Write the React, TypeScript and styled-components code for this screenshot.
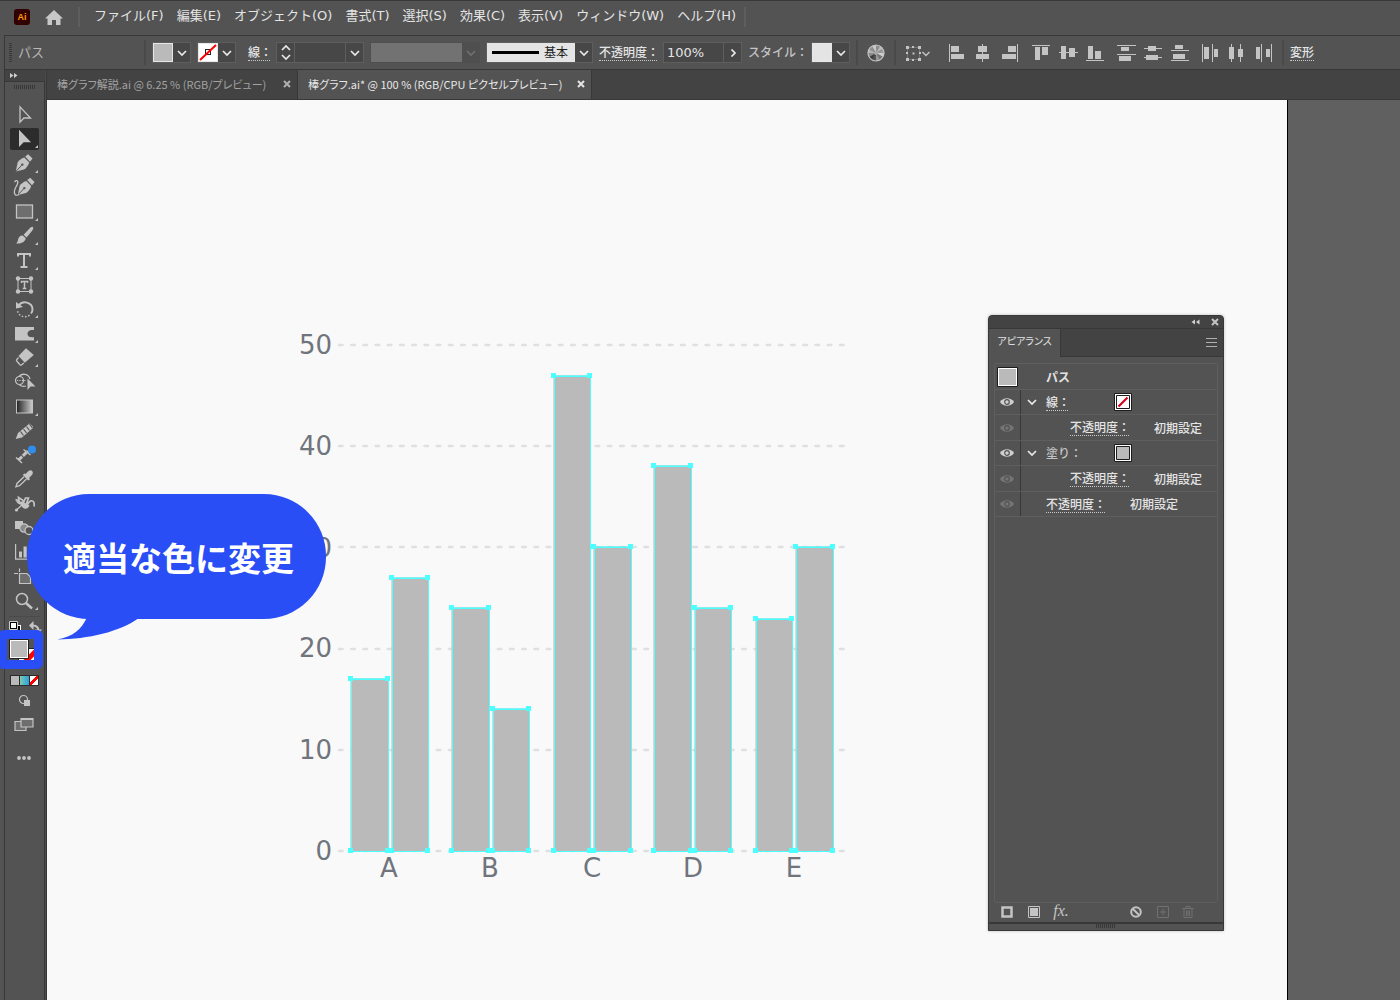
import React from "react";
import styled, { createGlobalStyle } from "styled-components";

const c = {
  bar: "#535353",
  dark: "#434343",
  line: "#383838",
  soft: "#5e5e5e",
  field: "#474747",
  icon: "#c4c4c4",
  text: "#e4e4e4",
  gray: "#bababa",
  blue: "#2a4ef5",
  cyan: "#4dffff",
};

const Global = createGlobalStyle`
  *, *::before, *::after { box-sizing: border-box; }
  body {
    margin: 0;
    background: ${c.bar};
    color: ${c.text};
    font: 12px/16px "DejaVu Sans", "Noto Sans CJK JP", sans-serif;
  }
  button, input, select { font: inherit; color: inherit; margin: 0; padding: 0; border: 0; background: none; border-radius: 0; }
  svg { display: block; }
`;

const Window = styled.div`
  position: relative;
  display: flex;
  flex-direction: column;
  min-height: 100vh;
  overflow: hidden;
  border-top: 1px solid ${c.line};
`;

/* ---------- menu bar ---------- */
const MenuBar = styled.header`
  display: flex;
  align-items: center;
  height: 34px;
  padding: 0 14px 2px;
`;
const Logo = styled.span`
  width: 16px;
  height: 16px;
  border-radius: 3px;
  background: #330000;
  color: #ff9a00;
  font: bold 9px/16px "Liberation Sans", sans-serif;
  text-align: center;
`;
const HomeButton = styled.button`
  margin: 0 14px;
`;
const MenuRule = styled.span`
  width: 2px;
  height: 20px;
  background: ${c.soft};
`;
const Menus = styled.nav`
  display: flex;
  gap: 13px;
  padding: 0 8px 2px 14px;
  font-size: 13px;
`;
const MenuButton = styled.button`
  white-space: nowrap;
`;

/* ---------- control bar ---------- */
const ControlBar = styled.div`
  display: flex;
  align-items: center;
  gap: 6px;
  height: 35px;
  margin-left: 4px;
  padding-left: 4px;
  border: 1px solid ${c.line};
  border-right: 0;
  white-space: nowrap;
`;
const Grip = styled.span<{ $w: number; $h: number; $vertical?: boolean }>`
  flex: none;
  width: ${(p) => p.$w}px;
  height: ${(p) => p.$h}px;
  background: repeating-linear-gradient(${(p) => (p.$vertical ? "180deg" : "90deg")}, ${c.line} 0 1px, transparent 1px 2px);
`;
const Rule = styled.span`
  flex: none;
  width: 2px;
  height: 25px;
  background: #4a4a4a;
`;
const BarTitle = styled.span`
  flex: none;
  width: 120px;
  color: #b8b8b8;
  font-size: 13px;
`;
const Dotted = styled.button<{ $w?: number; $indent?: number; $plain?: boolean }>`
  flex: none;
  width: ${(p) => (p.$w ? p.$w + "px" : "auto")};
  margin-left: ${(p) => p.$indent ?? 0}px;
  padding-top: 2px;
  line-height: 14px;
  text-align: left;
  white-space: nowrap;
  font-weight: 500;
  color: ${(p) => (p.$plain ? "#c4c4c4" : c.text)};
  border-bottom: 1px ${(p) => (p.$plain ? "solid transparent" : "dotted #c8c8c8")};
`;
const Combo = styled.div<{ $disabled?: boolean }>`
  position: relative;
  flex: none;
  display: flex;
  height: 21px;
  border: 1px solid ${(p) => (p.$disabled ? "transparent" : c.soft)};
  background: ${(p) => (p.$disabled ? "#4f4f4f" : c.field)};
`;
const Arrow = styled.button`
  display: grid;
  place-items: center;
  width: 17px;
  height: 19px;
`;
const Swatch = styled.button<{ $fill: string }>`
  width: 20px;
  height: 19px;
  border: 1px solid #e6e6e6;
  background: ${(p) => p.$fill};
`;
const Stepper = styled.div`
  display: flex;
  flex-direction: column;
  width: 18px;
  border-right: 1px solid ${c.soft};
`;
const StepButton = styled.button`
  display: grid;
  place-items: center;
  flex: 1;
`;
const Field = styled.input<{ $w: number }>`
  width: ${(p) => p.$w}px;
  padding: 0 3px;
  border-right: 1px solid ${c.soft};
  font-size: 13px;
`;
const Profile = styled.select`
  width: 91px;
  appearance: none;
  background: #828282;
`;
const BrushSelect = styled.select`
  width: 88px;
  padding-left: 57px;
  appearance: none;
  background: #e4e4e4;
  color: #1c1c1c;
`;
const BrushLine = styled.span`
  position: absolute;
  left: 5px;
  top: 8px;
  width: 47px;
  height: 3px;
  background: #000;
  pointer-events: none;
`;
const IconButton = styled.button<{ $w: number }>`
  flex: none;
  display: grid;
  place-items: center;
  width: ${(p) => p.$w}px;
  height: 24px;
`;
const AlignGroups = styled.div`
  display: flex;
  gap: 11px;
  padding-left: 7px;
`;
const AlignGroup = styled.div`
  display: flex;
  gap: 7px;
`;

/* ---------- main area ---------- */
const Main = styled.div`
  flex: 1;
  display: flex;
  margin-left: 4px;
  border-left: 1px solid ${c.line};
`;
const Tools = styled.aside`
  flex: none;
  display: flex;
  flex-direction: column;
  width: 42px;
  border-right: 1px solid ${c.line};
  box-shadow: inset -1px 0 #4b4b4b, inset -2px 0 ${c.line};
`;
const ToolsHead = styled.div`
  height: 12px;
  width: 40px;
  padding: 3px 5px;
  background: ${c.dark};
  border-bottom: 1px solid ${c.line};
`;
const ToolsGrip = styled.div`
  height: 22px;
  padding: 3px 9px;
  display: flex;
`;
const ToolList = styled.div`
  display: flex;
  flex-direction: column;
  justify-content: space-between;
  height: 508px;
  padding-left: 5px;
`;
const ToolButton = styled.button<{ $on?: boolean }>`
  width: 29px;
  height: 22px;
  border-radius: 2px;
  background: ${(p) => (p.$on ? "#2c2c2c" : "transparent")};
`;
const ToolRule = styled.hr`
  width: 31px;
  height: 1px;
  margin: 4px 4px;
  border: 0;
  background: #4a4a4a;
`;
const MiniRow = styled.div`
  display: flex;
  justify-content: space-between;
  width: 37px;
  height: 14px;
  padding-left: 4px;
`;
const FillStroke = styled.div`
  position: relative;
  width: 30px;
  height: 30px;
  margin: 4px 0 6px 4px;
`;
const Highlight = styled.div`
  position: absolute;
  left: -11px;
  top: -9px;
  width: 45px;
  height: 39px;
  border: 9px solid ${c.blue};
  border-radius: 6px;
`;
const ModeRow = styled.div`
  display: flex;
  width: 29px;
  height: 11px;
  margin-left: 5px;
  border: 1px solid #2c2c2c;
`;
const Mode = styled.button<{ $bg: string }>`
  flex: 1;
  background: ${(p) => p.$bg};
  & + & { border-left: 1px solid #2c2c2c; }
`;
const LowerIcons = styled.div`
  display: flex;
  flex-direction: column;
  align-items: center;
  width: 38px;
  gap: 10px;
  padding-top: 8px;
`;

const Workspace = styled.main`
  flex: 1;
  min-width: 0;
  display: flex;
  flex-direction: column;
`;
const TabBar = styled.div`
  display: flex;
  height: 30px;
  background: ${c.dark};
  border-bottom: 1px solid ${c.line};
`;
const Tab = styled.div<{ $on?: boolean; $w: number }>`
  display: flex;
  justify-content: space-between;
  align-items: center;
  width: ${(p) => p.$w}px;
  padding: 0 6px 2px 10px;
  border-right: 1px solid ${c.line};
  background: ${(p) => (p.$on ? c.bar : "transparent")};
  color: ${(p) => (p.$on ? "#e8e8e8" : "#a2a2a2")};
`;
const TabName = styled.button`
  font: 11px/16px "Noto Sans CJK JP", sans-serif;
  font-feature-settings: "palt";
  white-space: nowrap;
`;
const Canvas = styled.div`
  flex: 1;
  display: flex;
  padding-right: 112px;
  background: #606060;
`;
const Artboard = styled.div`
  position: relative;
  flex: 1;
  padding: 230px 0 0 243px;
  background: #f9f9f9;
  border-right: 1px solid #000;
`;
const ChartText = styled.text`
  font: 26px "DejaVu Sans", sans-serif;
  fill: #70747c;
`;

/* ---------- floating panel ---------- */
const Panel = styled.section`
  position: absolute;
  left: 941px;
  top: 215px;
  width: 236px;
  display: flex;
  flex-direction: column;
  background: ${c.bar};
  border: 1px solid ${c.line};
  border-radius: 4px 4px 0 0;
  box-shadow: 0 0 3px rgba(0, 0, 0, 0.25);
  font-weight: 500;
`;
const PanelTop = styled.div`
  display: flex;
  justify-content: flex-end;
  align-items: center;
  gap: 11px;
  height: 13px;
  padding-right: 4px;
  border-bottom: 1px solid ${c.line};
  border-radius: 3px 3px 0 0;
  background: ${c.dark};
`;
const PanelTabs = styled.div`
  display: flex;
  justify-content: space-between;
  height: 28px;
  padding-right: 6px;
  background: ${c.dark};
  border-bottom: 1px solid ${c.line};
`;
const PanelTab = styled.button`
  width: 72px;
  height: 28px;
  padding: 0 0 4px;
  background: ${c.bar};
  border-right: 1px solid ${c.line};
  font: 10px/16px "Noto Sans CJK JP", sans-serif;
  font-feature-settings: "palt";
`;
const List = styled.div`
  height: 540px;
  margin: 6px 5px 0;
  border: 1px solid ${c.soft};
  border-radius: 2px;
`;
const Row = styled.div<{ $h: number }>`
  display: flex;
  align-items: stretch;
  height: ${(p) => p.$h}px;
  border-bottom: 1px solid ${c.soft};
`;
const EyeCell = styled.button`
  display: grid;
  place-items: center;
  width: 26px;
  padding-right: 1px;
  border-right: 1px solid ${c.line};
`;
const RowBody = styled.div<{ $sub?: boolean }>`
  flex: 1;
  display: flex;
  align-items: center;
  padding-left: ${(p) => (p.$sub ? 49 : 6)}px;
`;
const ObjectSwatch = styled.button`
  flex: none;
  align-self: center;
`;
const RowName = styled.strong`
  align-self: center;
  margin-left: 28px;
  padding-top: 2px;
  font-weight: 700;
`;
const Value = styled.span`
  margin-left: 25px;
  padding-top: 2px;
`;
const Expand = styled.button`
  width: 10px;
  margin-right: 9px;
`;
const Gap = styled.span<{ $short?: boolean }>`
  width: ${(p) => (p.$short ? 34 : 46)}px;
`;
const ObjectCell = styled.div`
  display: flex;
  padding-left: 2px;
`;
const Footer = styled.div`
  display: flex;
  align-items: center;
  height: 19px;
  padding: 0 28px 1px 12px;
`;
const FooterButton = styled.button<{ $gap: number; $w: number }>`
  width: ${(p) => p.$w}px;
  margin-left: ${(p) => p.$gap}px;
`;
const Fx = styled.span`
  font: italic 16px/14px "Liberation Serif", serif;
  color: ${c.icon};
`;
const PanelFoot = styled.div`
  display: flex;
  justify-content: center;
  height: 8px;
  border-top: 2px solid ${c.line};
`;

/* ---------- callout ---------- */
const Callout = styled.div`
  position: absolute;
  left: 27px;
  top: 493px;
  width: 299px;
  height: 125px;
  padding-left: 4px;
  border-radius: 62px;
  background: ${c.blue};
  color: #fff;
  text-align: center;
  font: 700 33px/126px "Noto Sans CJK JP", sans-serif;
  white-space: nowrap;
`;
const Tail = styled.svg`
  position: absolute;
  left: 30px;
  top: 123px;
`;

const Chevron = ({ color = "#e8e8e8", d = "M1 2l4 4 4-4" }: { color?: string; d?: string }) => (
  <svg width="10" height="8" viewBox="0 0 10 8" fill="none" stroke={color} strokeWidth="1.7"><path d={d} /></svg>
);
const Cross = ({ color = "#c4c4c4" }: { color?: string }) => (
  <svg width="8" height="8" viewBox="0 0 8 8" stroke={color} strokeWidth="2"><path d="M1 1l6 6M7 1l-6 6" /></svg>
);

const nib = (
  <>
    <path d="M5.800 18.500L7.600 9.600C9 7 11.500 5.500 14.300 4.500L19.200 9.600C18.200 12.700 16.500 15.200 14 16.400Z" />
    <path d="M15.200 3.600L18.200 1.200L22.500 5.400L20 8.800Z" />
    <path d="M6.300 18L11.700 12.300" stroke={c.bar} strokeWidth="1" />
    <circle cx="12.300" cy="11.600" r="1.200" fill={c.bar} />
  </>
);

type Tool = { name: string; more?: boolean; on?: boolean; art: React.ReactNode };
const tools: Tool[] = [
  { name: "選択", art: <path d="M10 2.800V18.200L13.900 14H20.500Z" fill="none" stroke={c.icon} strokeWidth="1.300" /> },
  { name: "ダイレクト選択", on: true, more: true, art: <path d="M9 1.700V19L13.700 14.300H21Z" /> },
  { name: "ペン", more: true, art: nib },
  {
    name: "曲線",
    art: (<><g transform="translate(2 -.5)">{nib}</g><path d="M4.500 5C7 2 9 4 7 8S3 14 5 17.500C6 18.500 8 18.300 9 17.500" fill="none" stroke={c.icon} strokeWidth="1.300" /></>),
  },
  { name: "長方形", more: true, art: <rect x="6.500" y="4" width="16" height="13" fill="#6e6e6e" stroke={c.icon} strokeWidth="1.300" /> },
  {
    name: "ブラシ", more: true,
    art: (<><path d="M22.500 1.800C24 2.500 23 4.500 22 6L16.500 12.500L13.600 9.700L19 4C20.500 2.500 21.500 1.700 22.500 1.800Z" /><path d="M12.800 10.500L15.700 13.300C15.500 16.500 11 19.500 6 18.300C8.500 17 7.500 14 9.200 12C10.200 10.900 11.500 10.500 12.800 10.500Z" /></>),
  },
  { name: "文字", more: true, art: <path d="M8 6.500V4H20V6.500M14 4V17M10.500 17H17.500" fill="none" stroke={c.icon} strokeWidth="2" /> },
  {
    name: "文字タッチ",
    art: (<><path d="M8 4.500H21V17.500H8Z" fill="none" stroke={c.icon} /><circle cx="8" cy="4.500" r="2.200" /><circle cx="21" cy="4.500" r="2.200" /><circle cx="8" cy="17.500" r="2.200" /><circle cx="21" cy="17.500" r="2.200" /><path d="M11.500 9V7.500H17.500V9M14.500 7.500V14.500M12.700 14.500H16.300" fill="none" stroke={c.icon} strokeWidth="1.500" /></>),
  },
  {
    name: "回転", more: true,
    art: (<><path d="M8.500 7.500C13 1.500 22.500 4.500 22.500 11.500C22.500 13 22 14.300 21 15.500" fill="none" stroke={c.icon} strokeWidth="1.900" /><path d="M6 4V10.500L13 9Z" /><path d="M19.500 17.200C15 20.500 9 18.500 7.500 13" fill="none" stroke={c.icon} strokeWidth="1.500" strokeDasharray="1.500 1.800" /></>),
  },
  { name: "線幅", more: true, art: <path d="M5 4H24V7H22.500C19 7 17.500 9 17.500 11S19 14.300 22.500 14.300H24V17.500H5Z" /> },
  {
    name: "消しゴム", more: true,
    art: (<><path d="M16 1.300L23.800 8L14.800 15.700L8.500 9Z" /><path d="M8.500 10.500L6.600 12.800C6.300 13.300 6.500 13.800 6.900 14.200L10 17.700C10.500 18.200 11.200 18.200 11.700 17.800L13.800 16" fill="none" stroke={c.icon} strokeWidth="1.300" /></>),
  },
  {
    name: "シェイプ形成",
    art: (<><circle cx="9.500" cy="9.500" r="4" fill="none" stroke={c.icon} strokeWidth="1.200" /><path d="M9 5.500C12 2 18.500 2.500 20 8M9.500 14C12 15.800 14 15.600 16 15" fill="none" stroke={c.icon} strokeWidth="1.300" /><path d="M7 9.500H16" stroke={c.icon} strokeDasharray="1.200 1.200" /><path d="M17.500 7.500V19L20.500 15.500H25.500Z" /></>),
  },
  { name: "グラデーション", more: true, art: <rect x="6.500" y="4" width="16" height="13" fill="url(#toolGradient)" stroke={c.icon} /> },
  {
    name: "鉛筆",
    art: (<><path d="M5.700 19L8 13L19.500 3.500L23 6.500V8L12 17.500Z" /><path d="M10.500 11.500L13.500 15.500M13.500 9L16.500 13M16.500 6.500L19.500 10.500M19.500 4L22.500 8" stroke={c.bar} strokeWidth="1.200" /></>),
  },
  {
    name: "寸法",
    art: (<><path d="M8.500 16L18 7" stroke={c.icon} strokeWidth="3" strokeDasharray="5 1" /><path d="M6 13.500L12 19M13.500 5.500L20.500 11" stroke={c.icon} strokeWidth="1.400" /><circle cx="22" cy="5.500" r="4" fill="#2f8ded" /></>),
  },
  {
    name: "スポイト",
    art: (<><path d="M15.500 6L18.500 3C20 1.800 22.500 2 22.800 4.500C23 6 22 7 21 8L19 10L20 11.200L18.300 12.500L12.800 7L14.300 5.500Z" /><path d="M14 8.700L7 15.500L6 18.800L9.500 17.700L16.500 11" fill="none" stroke={c.icon} strokeWidth="1.400" /></>),
  },
  {
    name: "パペットワープ",
    art: (<><path d="M5.500 6.500L9 8L8.500 4.500L12.500 7L13.500 9.500L15.500 5L18.500 5L16.500 10.500C18.500 11 19 8.500 21 7.800C23.500 7.300 24.800 10 24 13.500" fill="none" stroke={c.icon} strokeWidth="1.700" /><path d="M6 8C8 12 11 11 11.500 12.500C12.500 17 19 16.500 19.500 12L15 10L11 8.500Z" /><path d="M6.500 17L13 11" stroke={c.icon} strokeWidth="1.200" /><circle cx="6.500" cy="17" r="1.600" /></>),
  },
  {
    name: "ブレンド",
    art: (<><rect x="5" y="4" width="8" height="8" /><circle cx="14" cy="11" r="4.200" fill="#8a8a8a" stroke={c.icon} strokeWidth="1.200" /><circle cx="19" cy="13.500" r="4" fill={c.bar} stroke={c.icon} strokeWidth="1.300" /></>),
  },
  { name: "グラフ", more: true, art: <path d="M5 3H6.200V17.500H24V18.700H5ZM9 10.500H12V16.500H9ZM13.500 5.500H16.700V16.500H13.500ZM18.500 8H21.500V16.500H18.500Z" /> },
  { name: "アートボード", art: <path d="M4 7.500H8M9.500 2.500V6M9.500 7.500H17L20.500 11V17.500H9.500Z" fill="#6e6e6e" stroke={c.icon} strokeWidth="1.200" /> },
  { name: "ズーム", more: true, art: <><circle cx="12" cy="9" r="5.500" fill="none" stroke={c.icon} strokeWidth="1.500" /><path d="M16 13L22 18.500" stroke={c.icon} strokeWidth="2.500" /></> },
];

const bars = [
  [351, 388, 679], [392, 428, 578], [452, 489, 608], [493, 529, 709], [554, 590, 376],
  [594, 631, 547], [654, 691, 466], [695, 731, 608], [756, 792, 619], [796, 833, 547],
];
const levels: [string, number, number][] = [
  ["50", 345, 354], ["40", 446, 455], ["30", 547, 557], ["20", 649, 657], ["10", 750, 759], ["0", 851, 860],
];
const groups: [string, number][] = [["A", 389], ["B", 490], ["C", 592], ["D", 693], ["E", 794]];

const Chart = () => (
  <svg width="560" height="560" viewBox="290 330 560 560" role="img" aria-label="棒グラフ">
    {levels.map(([label, y, base]) => (
      <g key={label}>
        <path d={`M339 ${y}H845`} stroke="#e0e0e0" strokeWidth="2.600" strokeLinecap="round" strokeDasharray="3.500 8.720" />
        <ChartText x="332" y={base} textAnchor="end">{label}</ChartText>
      </g>
    ))}
    {bars.map(([l, r, t]) => (
      <rect key={l} x={l - 0.5} y={t - 0.5} width={r - l + 1} height={852 - t} fill={c.gray} />
    ))}
    {bars.map(([l, r, t]) => (
      <g key={l}>
        <rect x={l + 0.5} y={t + 0.5} width={r - l} height={851 - t} fill="none" stroke={c.cyan} />
        <path d={`M${l} ${t - 0.5}H${r}`} stroke={c.cyan} opacity=".6" />
        {[[l, t], [r, t], [l, 851], [r, 851]].map(([x, y]) => (
          <rect key={`${x}-${y}`} x={x - 3} y={y - 3} width="5" height="5" fill={c.cyan} />
        ))}
      </g>
    ))}
    {groups.map(([label, x]) => (
      <ChartText key={label} x={x} y="877" textAnchor="middle">{label}</ChartText>
    ))}
  </svg>
);

const aligns: [string, string][][] = [
  [
    ["左揃え", "M2 1h1v18h-1zM4 3h8v6h-8zM4 11h13v5h-13z"],
    ["水平方向中央", "M8 1h1v18h-1zM4 3h9v6h-9zM2 11h13v5h-13z"],
    ["右揃え", "M16 1h1v18h-1zM7 3h8v6h-8zM1 11h14v5h-14z"],
  ],
  [
    ["上揃え", "M0 2h18v1h-18zM3 4h5v13h-5zM10 4h6v8h-6z"],
    ["垂直方向中央", "M0 9h19v1h-19zM2 3h5v13h-5zM10 5h6v9h-6z"],
    ["下揃え", "M0 17h18v1h-18zM2 3h5v13h-5zM9 8h6v8h-6z"],
  ],
  [
    ["上端分布", "M0 2h19v1h-19zM0 11h19v1h-19zM4 4h8v4h-8zM2 13h12v5h-12z"],
    ["垂直分布", "M0 5h18v1h-18zM0 14h18v1h-18zM4 3h8v5h-8zM2 12h12v5h-12z"],
    ["下端分布", "M0 7h18v1h-18zM0 17h18v1h-18zM4 2h8v4h-8zM2 11h12v5h-12z"],
  ],
  [
    ["左端分布", "M0 1h1v18h-1zM10 1h1v18h-1zM2 4h5v12h-5zM12 6h4v8h-4z"],
    ["水平分布", "M2 1h1v18h-1zM11 1h1v18h-1zM0 4h5v12h-5zM9 6h5v8h-5z"],
    ["右端分布", "M5 1h1v18h-1zM15 1h1v18h-1zM0 4h4v12h-4zM10 6h4v8h-4z"],
  ],
];

const Eye = ({ dim }: { dim?: boolean }) => (
  <svg width="14" height="10" viewBox="0 0 14 10">
    <path d="M0 5C3 0 11 0 14 5C11 10 3 10 0 5Z" fill={dim ? "#757575" : "#cfcfcf"} />
    <circle cx="7" cy="5" r="2.300" fill="none" stroke={c.bar} strokeWidth="1.200" />
  </svg>
);

const menus = ["ファイル(F)", "編集(E)", "オブジェクト(O)", "書式(T)", "選択(S)", "効果(C)", "表示(V)", "ウィンドウ(W)", "ヘルプ(H)"];

const Wheel = () => (
  <svg width="18" height="18" viewBox="-9 -9 18 18">
    {Array.from({ length: 12 }, (_, i) => {
      const a = (i * Math.PI) / 6;
      const b = ((i + 1) * Math.PI) / 6;
      const shade = ["#cfcfcf", "#777", "#9a9a9a", "#555", "#3f3f3f", "#8a8a8a", "#b4b4b4", "#909090", "#c8c8c8", "#8e8e8e", "#bbb", "#999"][i];
      return <path key={i} fill={shade} d={`M0 0L${8 * Math.cos(a)} ${8 * Math.sin(a)}A8 8 0 0 1 ${8 * Math.cos(b)} ${8 * Math.sin(b)}Z`} />;
    })}
    <circle r="8" fill="none" stroke="#c4c4c4" strokeWidth="1.200" />
    <circle r="2" fill="#a8a8a8" />
  </svg>
);

const AttributeSwatch = ({ fill, none }: { fill: string; none?: boolean }) => (
  <svg width="18" height="18" viewBox="0 0 18 18">
    <path d="M.5 .5H17.500V17.500H.5Z" fill="#fff" stroke="#1c1c1c" />
    <path d="M2.500 2.500H15.500V15.500H2.500Z" fill={fill} stroke="#1c1c1c" />
    {none && <path d="M4.500 13.500L13.500 4.500" stroke="#d0021b" strokeWidth="2.200" />}
  </svg>
);

const OpacityRow = ({ sub, h }: { sub?: boolean; h: number }) => (
  <Row $h={h}>
    <EyeCell aria-label="表示"><Eye dim /></EyeCell>
    <RowBody $sub={sub}>
      <Dotted $w={59} $indent={sub ? 0 : 19}>不透明度：</Dotted>
      <Value>初期設定</Value>
    </RowBody>
  </Row>
);

export default function App() {
  return (
    <Window>
      <Global />
      <MenuBar>
        <Logo>Ai</Logo>
        <HomeButton aria-label="ホーム">
          <svg width="20" height="17" viewBox="0 0 20 17" fill="#c8c8c8"><path d="M10 1L1 9.500H3.500V16H8V11H12V16H16.500V9.500H19Z" /></svg>
        </HomeButton>
        <MenuRule />
        <Menus>{menus.map((m) => <MenuButton key={m}>{m}</MenuButton>)}</Menus>
        <MenuRule />
      </MenuBar>

      <ControlBar>
        <Grip $w={3} $h={19} $vertical />
        <BarTitle>パス</BarTitle>
        <Rule />
        <Combo>
          <Swatch $fill={c.gray} aria-label="塗り" />
          <Arrow aria-label="塗りの一覧"><Chevron /></Arrow>
        </Combo>
        <Combo>
          <Swatch $fill="#fff" aria-label="線">
            <svg width="18" height="17" viewBox="0 0 18 17" fill="none"><rect x="6.500" y="5.500" width="5" height="5" stroke="#222" /><path d="M1 16L17 1" stroke="#f00" strokeWidth="2" /></svg>
          </Swatch>
          <Arrow aria-label="線の一覧"><Chevron /></Arrow>
        </Combo>
        <Dotted $w={22} $indent={6}>線：</Dotted>
        <Combo>
          <Stepper>
            <StepButton aria-label="増やす"><Chevron d="M1 6l4-4 4 4" /></StepButton>
            <StepButton aria-label="減らす"><Chevron /></StepButton>
          </Stepper>
          <Field $w={51} aria-label="線幅" />
          <Arrow aria-label="線幅の一覧"><Chevron /></Arrow>
        </Combo>
        <Combo $disabled>
          <Profile disabled aria-label="可変線幅プロファイル" />
          <Arrow disabled aria-label="プロファイルの一覧"><Chevron color="#707070" /></Arrow>
        </Combo>
        <Combo>
          <BrushSelect aria-label="ブラシ定義"><option>基本</option></BrushSelect>
          <BrushLine />
          <Arrow aria-label="ブラシの一覧"><Chevron /></Arrow>
        </Combo>
        <Dotted $w={58}>不透明度：</Dotted>
        <Combo>
          <Field $w={60} defaultValue="100%" aria-label="不透明度" />
          <Arrow aria-label="不透明度の一覧"><Chevron d="M3.500 .5l3.500 3.500-3.500 3.500" /></Arrow>
        </Combo>
        <Dotted $w={57} $plain>スタイル：</Dotted>
        <Combo>
          <Swatch $fill="#e4e4e4" aria-label="スタイル" />
          <Arrow aria-label="スタイルの一覧"><Chevron /></Arrow>
        </Combo>
        <Rule />
        <IconButton $w={24} aria-label="オブジェクトを再配色"><Wheel /></IconButton>
        <Rule />
        <IconButton $w={32} aria-label="整列">
          <svg width="26" height="18" viewBox="0 0 26 18" fill="none">
            <path d="M2.500 3.500H14.500V15.500H2.500Z" stroke="#9a9a9a" strokeDasharray="1 1" />
            <path d="M1 2h3v3h-3zM7 2h2v2h-2zM13 2h3v3h-3zM1 8h2v2h-2zM7.500 8.500h2v2h-2zM14 8h2v2h-2zM1 14h3v3h-3zM7 15h2v2h-2zM13 14h3v3h-3z" fill={c.icon} />
            <path d="M17.500 8l3.500 3.500 3.500-3.500" stroke={c.icon} strokeWidth="1.400" />
          </svg>
        </IconButton>
        <AlignGroups>
          {aligns.map((g, i) => (
            <AlignGroup key={i}>
              {g.map(([name, d]) => (
                <IconButton key={name} $w={20} aria-label={name}>
                  <svg width="20" height="20" viewBox="0 0 20 20" fill={c.icon}><path d={d} /></svg>
                </IconButton>
              ))}
            </AlignGroup>
          ))}
        </AlignGroups>
        <Rule />
        <Dotted>変形</Dotted>
      </ControlBar>

      <Main>
        <Tools>
          <ToolsHead>
            <svg width="8" height="5" viewBox="0 0 8 5" fill="#d0d0d0"><path d="M0 0L3.500 2.500L0 5ZM4 0L7.500 2.500L4 5Z" /></svg>
          </ToolsHead>
          <ToolsGrip><Grip $w={21} $h={4} /></ToolsGrip>
          <ToolList>
            {tools.map((t) => (
              <ToolButton key={t.name} $on={t.on} aria-label={t.name}>
                <svg width="29" height="22" viewBox="0 0 29 22" fill={c.icon}>
                  <defs>
                    <linearGradient id="toolGradient"><stop stopColor="#222" /><stop offset="1" stopColor="#ccc" /></linearGradient>
                  </defs>
                  {t.art}
                  {t.more && <path d="M28 17V20H25Z" />}
                </svg>
              </ToolButton>
            ))}
          </ToolList>
          <ToolRule />
          <MiniRow>
            <svg width="13" height="13" viewBox="0 0 13 13"><path d="M4 4H12V12H4Z" fill="#fff" /><path d="M5 5H11V11H5Z" fill="#000" /><path d="M.5.500H8.500V8.500H.5Z" fill="#000" stroke="#ccc" /><path d="M2 2H7V7H2Z" fill="#fff" /></svg>
            <svg width="13" height="13" viewBox="0 0 13 13" fill="none"><path d="M4 4.500C8 4.500 9.500 6 9.500 10" stroke={c.icon} strokeWidth="2" /><path d="M0 4.500L4.500 0V9ZM6 8.500H13L9.500 13Z" fill={c.icon} /></svg>
          </MiniRow>
          <FillStroke>
            <svg width="30" height="30" viewBox="0 0 30 30">
              <path d="M9.500 9.500H29.500V29.500H9.500Z" fill="#fff" stroke="#222" />
              <path d="M10 29L29 10" stroke="#f00" strokeWidth="5" />
              <path d="M.5.500H19.500V19.500H.5Z" fill="#fff" stroke="#222" />
              <path d="M2 2H18V18H2Z" fill={c.gray} />
            </svg>
            <Highlight />
          </FillStroke>
          <ModeRow>
            <Mode $bg={c.gray} aria-label="カラー" />
            <Mode $bg="linear-gradient(90deg, #7fc9b0, #2aa0dc)" aria-label="グラデーション" />
            <Mode $bg="linear-gradient(135deg, #fff 0 38%, #f00 38% 62%, #fff 62%)" aria-label="なし" />
          </ModeRow>
          <LowerIcons>
            <svg width="13" height="13" viewBox="0 0 13 13"><circle cx="5.500" cy="5.500" r="4" fill="none" stroke={c.icon} strokeWidth="1.200" /><path d="M6 6H12V12H6Z" fill={c.icon} /></svg>
            <svg width="20" height="15" viewBox="0 0 20 15"><path d="M1 4.500H12V13.500H1Z" fill="#6e6e6e" stroke={c.icon} strokeWidth="1.200" /><path d="M7 1.500H19V10H7Z" fill="#6e6e6e" stroke={c.icon} strokeWidth="1.200" /><path d="M7 1H19V3H7Z" fill={c.icon} /></svg>
            <svg width="16" height="28" viewBox="0 0 16 28" fill={c.icon}><circle cx="3" cy="16" r="1.900" /><circle cx="8" cy="16" r="1.900" /><circle cx="13" cy="16" r="1.900" /></svg>
          </LowerIcons>
        </Tools>

        <Workspace>
          <TabBar>
            <Tab $w={251}><TabName>棒グラフ解説.ai @ 6.25 % (RGB/プレビュー)</TabName><button aria-label="閉じる"><Cross color="#b0b0b0" /></button></Tab>
            <Tab $w={294} $on><TabName>棒グラフ.ai* @ 100 % (RGB/CPU ピクセルプレビュー)</TabName><button aria-label="閉じる"><Cross color="#e4e4e4" /></button></Tab>
          </TabBar>
          <Canvas>
            <Artboard>
              <Chart />
              <Panel>
                <PanelTop>
                  <svg width="9" height="6" viewBox="0 0 9 6" fill="#d0d0d0"><path d="M4 .5V5.500L.5 3ZM8.500 .5V5.500L5 3Z" /></svg>
                  <button aria-label="パネルを閉じる"><Cross /></button>
                </PanelTop>
                <PanelTabs>
                  <PanelTab>アピアランス</PanelTab>
                  <button aria-label="パネルメニュー"><svg width="11" height="9" viewBox="0 0 11 9" stroke="#b0b0b0"><path d="M0 .5H11M0 4.500H11M0 8.500H11" /></svg></button>
                </PanelTabs>
                <List>
                  <Row $h={26}>
                    <ObjectCell>
                      <ObjectSwatch aria-label="パスのサムネール">
                        <svg width="21" height="20" viewBox="0 0 21 20"><path d="M.5 .5H20.500V19.500H.5Z" fill="#fff" stroke="#1c1c1c" /><path d="M2 2H19V18H2Z" fill={c.gray} /></svg>
                      </ObjectSwatch>
                      <RowName>パス</RowName>
                    </ObjectCell>
                  </Row>
                  <Row $h={25}>
                    <EyeCell aria-label="表示"><Eye /></EyeCell>
                    <RowBody>
                      <Expand aria-label="展開"><Chevron /></Expand>
                      <Dotted $w={22}>線：</Dotted>
                      <Gap />
                      <ObjectSwatch aria-label="線のカラー"><AttributeSwatch fill="#fff" none /></ObjectSwatch>
                    </RowBody>
                  </Row>
                  <OpacityRow sub h={26} />
                  <Row $h={25}>
                    <EyeCell aria-label="表示"><Eye /></EyeCell>
                    <RowBody>
                      <Expand aria-label="展開"><Chevron /></Expand>
                      <Dotted $w={34} $plain>塗り：</Dotted>
                      <Gap $short />
                      <ObjectSwatch aria-label="塗りのカラー"><AttributeSwatch fill={c.gray} /></ObjectSwatch>
                    </RowBody>
                  </Row>
                  <OpacityRow sub h={26} />
                  <OpacityRow h={25} />
                </List>
                <Footer>
                  <FooterButton $w={12} $gap={0} aria-label="新規線"><svg width="12" height="12" viewBox="0 0 12 12"><path d="M1.500 1.500H10.500V10.500H1.500Z" fill="none" stroke={c.icon} strokeWidth="2.500" /></svg></FooterButton>
                  <FooterButton $w={12} $gap={15} aria-label="新規塗り"><svg width="12" height="12" viewBox="0 0 12 12"><path d="M.5.500H11.500V11.500H.5Z" fill="none" stroke={c.icon} /><path d="M2 2H10V10H2Z" fill={c.icon} /></svg></FooterButton>
                  <FooterButton $w={16} $gap={13} aria-label="効果"><Fx>fx.</Fx></FooterButton>
                  <FooterButton $w={12} $gap={61} aria-label="消去"><svg width="12" height="12" viewBox="0 0 12 12" fill="none" stroke={c.icon} strokeWidth="2"><circle cx="6" cy="6" r="4.800" /><path d="M3 3L9 9" /></svg></FooterButton>
                  <FooterButton $w={12} $gap={15} aria-label="複製"><svg width="12" height="12" viewBox="0 0 12 12" fill="none" stroke="#707070"><path d="M.5.500H11.500V11.500H.5ZM6 3V9M3 6H9" /></svg></FooterButton>
                  <FooterButton $w={12} $gap={13} aria-label="削除"><svg width="12" height="12" viewBox="0 0 12 12" fill="none" stroke="#707070"><path d="M.5 2.500H11.500M4 2V.5H8V2M2 3V11.500H10V3M4.500 4.500V10M6 4.500V10M7.500 4.500V10" /></svg></FooterButton>
                </Footer>
                <PanelFoot><Grip $w={20} $h={4} /></PanelFoot>
              </Panel>
            </Artboard>
          </Canvas>
        </Workspace>
      </Main>

      <Callout>
        適当な色に変更
        <Tail width="84" height="24" viewBox="0 0 84 24" fill={c.blue}><path d="M30 0C25 12 16 20 0 22.500C32 22 62 15 82 1L84 0Z" /></Tail>
      </Callout>
    </Window>
  );
}
